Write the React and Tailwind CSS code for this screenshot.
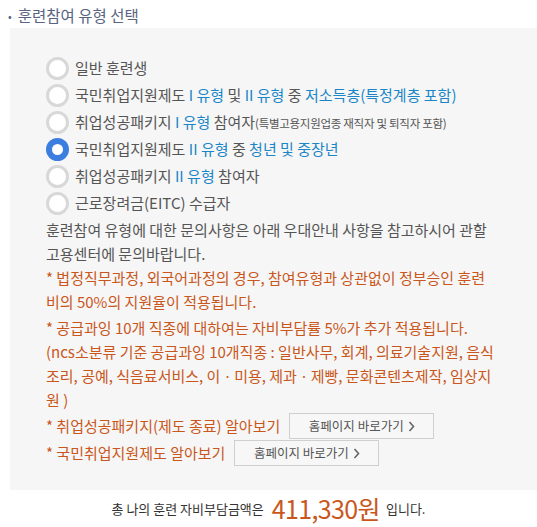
import React, { useState } from 'react';

const options = [
  { id: 'general', label: <>일반 훈련생</> },
  {
    id: 'kua1',
    label: (
      <>
        국민취업지원제도 <b className="font-normal text-[#1a86c8]">I 유형</b> 및{' '}
        <b className="font-normal text-[#1a86c8]">II 유형</b> 중{' '}
        <b className="font-normal text-[#1a86c8]">저소득층(특정계층 포함)</b>
      </>
    ),
  },
  {
    id: 'pkg1',
    label: (
      <>
        취업성공패키지 <b className="font-normal text-[#1a86c8]">I 유형</b> 참여자
        <span className="text-[11.5px] tracking-tight">(특별고용지원업종 재직자 및 퇴직자 포함)</span>
      </>
    ),
  },
  {
    id: 'kua2',
    label: (
      <>
        국민취업지원제도 <b className="font-normal text-[#1a86c8]">II 유형</b> 중{' '}
        <b className="font-normal text-[#1a86c8]">청년 및 중장년</b>
      </>
    ),
  },
  {
    id: 'pkg2',
    label: (
      <>
        취업성공패키지 <b className="font-normal text-[#1a86c8]">II 유형</b> 참여자
      </>
    ),
  },
  { id: 'eitc', label: <>근로장려금(EITC) 수급자</> },
];

const Radio = ({ checked }) => (
  <span
    className={
      checked
        ? 'w-[23px] h-[23px] rounded-full border-[6px] border-[#3c7de0] bg-white shrink-0'
        : 'w-[23px] h-[23px] rounded-full border-[3px] border-[#d8d8d8] bg-white shrink-0'
    }
  />
);

const LinkButton = ({ className }) => (
  <button
    className={`h-[26px] border border-[#cfcfcf] bg-[#f7f7f7] text-[12.5px] text-[#555] flex items-center justify-center gap-[4px] ${className}`}
  >
    홈페이지 바로가기
    <svg width="7" height="11" viewBox="0 0 7 11" fill="none">
      <path d="M1.5 1 L5.5 5.5 L1.5 10" stroke="#666" strokeWidth="1.6" />
    </svg>
  </button>
);

export default function App() {
  const [selected, setSelected] = useState('kua2');

  return (
    <div
      className="w-[537px] h-[527px] bg-white text-[15px] text-[#555] overflow-hidden"
      style={{ fontFamily: '"Noto Sans CJK KR", "Noto Sans", sans-serif' }}
    >
      <h2 className="h-[28px] flex items-center pl-[8px] pt-[4px] text-[15.5px] text-[#5a6482]">
        <span className="mr-[6px] text-[11px]">•</span>훈련참여 유형 선택
      </h2>

      <div className="ml-[10px] bg-[#f6f6f6] pl-[36px] pr-[40px] pt-[27px] h-[462px]">
        <ul>
          {options.map((o) => (
            <li
              key={o.id}
              onClick={() => setSelected(o.id)}
              className="h-[27px] flex items-center gap-[6px] whitespace-nowrap cursor-pointer"
            >
              <Radio checked={selected === o.id} />
              <span>{o.label}</span>
            </li>
          ))}
        </ul>

        <p className="leading-[24px] mt-[1px]">
          훈련참여 유형에 대한 문의사항은 아래 우대안내 사항을 참고하시어 관할 고용센터에 문의바랍니다.
        </p>

        <div className="text-[#c9571b] leading-[24px]">
          <p>* 법정직무과정, 외국어과정의 경우, 참여유형과 상관없이 정부승인 훈련비의 50%의 지원율이 적용됩니다.</p>
          <p className="mt-[2px]">* 공급과잉 10개 직종에 대하여는 자비부담률 5%가 추가 적용됩니다.</p>
          <p>(ncs소분류 기준 공급과잉 10개직종 : 일반사무, 회계, 의료기술지원, 음식조리, 공예, 식음료서비스, 이ㆍ미용, 제과ㆍ제빵, 문화콘텐츠제작, 임상지원 )</p>
          <div className="flex items-center gap-[9px] mt-[1px]">
            <span>* 취업성공패키지(제도 종료) 알아보기</span>
            <LinkButton className="w-[145px]" />
          </div>
          <div className="flex items-center gap-[9px] mt-[1px]">
            <span>* 국민취업지원제도 알아보기</span>
            <LinkButton className="w-[145px]" />
          </div>
        </div>
      </div>

      <div className="h-[37px] flex items-center justify-center text-[13px] text-[#333]">
        총 나의 훈련 자비부담금액은
        <strong className="font-normal text-[25px] text-[#c9571b] tracking-tight ml-[8px] mr-[6px] leading-none">
          411,330원
        </strong>
        입니다.
      </div>
    </div>
  );
}
